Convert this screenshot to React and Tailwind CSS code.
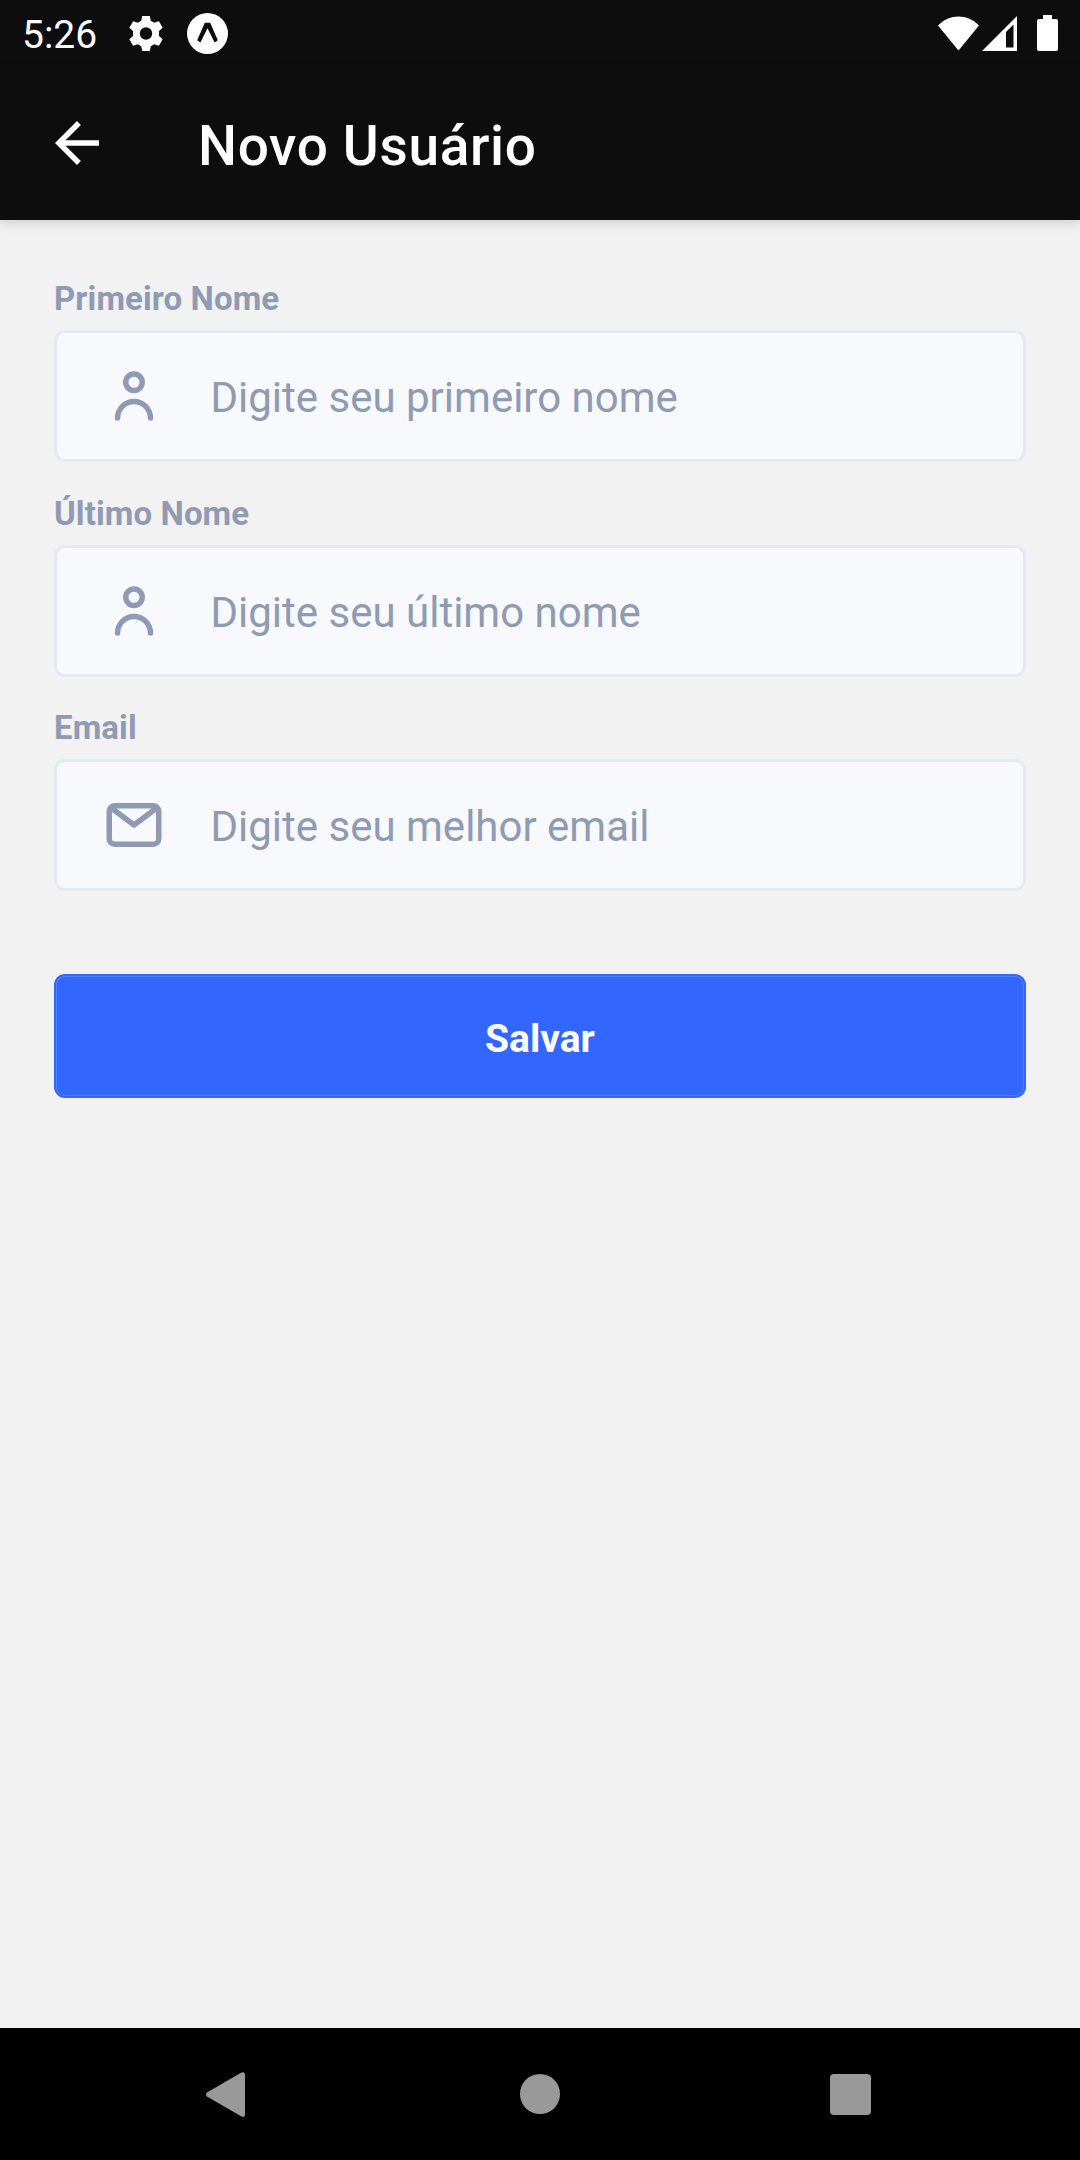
const PersonIcon = () => (
  <svg viewBox="0 0 24 24" className="size-[66px] shrink-0 fill-[#8f9bb3]">
    <path d="M12 11a4 4 0 1 0-4-4 4 4 0 0 0 4 4zm0-6a2 2 0 1 1-2 2 2 2 0 0 1 2-2z" />
    <path d="M12 13a7 7 0 0 0-7 7 1 1 0 0 0 2 0 5 5 0 0 1 10 0 1 1 0 0 0 2 0 7 7 0 0 0-7-7z" />
  </svg>
);

const EmailIcon = () => (
  <svg viewBox="0 0 24 24" className="size-[66px] shrink-0 fill-[#8f9bb3]">
    <path d="M19 4H5a3 3 0 0 0-3 3v10a3 3 0 0 0 3 3h14a3 3 0 0 0 3-3V7a3 3 0 0 0-3-3zm-.67 2L12 10.75 5.67 6zM19 18H5a1 1 0 0 1-1-1V7.25l7.4 5.55a1 1 0 0 0 1.2 0L20 7.25V17a1 1 0 0 1-1 1z" />
  </svg>
);

function StatusBar() {
  return (
    <div className="flex h-[66px] items-center bg-[#0d0d0d] pr-[22px] pl-[22px] text-white">
      <span className="w-[107px] pt-[3px] text-[39px] leading-[46px]">5:26</span>
      <svg viewBox="0 0 34 35" className="mt-[1px] h-[35px] w-[34px] fill-white">
        <path
          fillRule="evenodd"
          d="M13.2 0h7.6l1 4.8 3.4 2 4.7-1.6 3.8 6.6-3.7 3.2v5l3.7 3.2-3.8 6.6-4.7-1.6-3.4 2-1 4.8h-7.6l-1-4.8-3.4-2-4.7 1.6L.3 23.2 4 20v-5L.3 11.8l3.8-6.6 4.7 1.6 3.4-2zM17 11.3a6.2 6.2 0 1 0 0 12.4 6.2 6.2 0 0 0 0-12.4z"
        />
      </svg>
      <svg viewBox="0 0 41 41" className="ml-[24px] size-[41px]">
        <circle cx="20.5" cy="20.5" r="20.5" fill="#fff" />
        <path d="M17.8 9.7h5.4l7.6 17.6-3.2 2.2-7.1-14.3-7.1 14.3-3.2-2.2z" fill="#0d0d0d" />
      </svg>
      <svg viewBox="0 0 41 35" className="ml-auto h-[35px] w-[41px] fill-white">
        <path d="M0 9.5C11.5-2.5 29.5-2.5 41 9.5L20.5 34.5z" />
      </svg>
      <svg viewBox="0 0 35 35" className="ml-[3px] size-[35px] fill-white">
        <path fillRule="evenodd" d="M35 0v35H0zM31.5 8.5L24 16v15.5h7.5z" />
      </svg>
      <svg viewBox="0 0 21 36" className="ml-[20px] h-[36px] w-[21px] fill-white">
        <path d="M6 0h9v4h4a2 2 0 0 1 2 2v28a2 2 0 0 1-2 2H2a2 2 0 0 1-2-2V6a2 2 0 0 1 2-2h4z" />
      </svg>
    </div>
  );
}

function Header() {
  return (
    <header className="relative flex h-[154px] items-center bg-[#0d0d0d] pl-[44px] text-white shadow-[0_3px_11px_rgba(0,0,0,0.15)]">
      <svg viewBox="0 0 24 24" className="size-[66px] fill-white">
        <path d="M20 11H7.83l5.59-5.59L12 4l-8 8 8 8 1.41-1.41L7.83 13H20v-2z" />
      </svg>
      <h1 className="ml-[88px] pt-[6px] text-[55px] leading-[74px] font-medium tracking-[0.65px]">
        Novo Usuário
      </h1>
    </header>
  );
}

function Field({ label, placeholder, icon }) {
  return (
    <div className="flex flex-col">
      <span className="mb-[12px] text-[33px] leading-[38px] font-bold tracking-[0.1px]">{label}</span>
      <div className="flex h-[132px] items-center rounded-[11px] border-[3px] border-[#e4e9f2] bg-[#f7f9fc] pl-[44px]">
        {icon}
        <span className="ml-[43.5px] pt-[4px] text-[42px] leading-[50px]">{placeholder}</span>
      </div>
    </div>
  );
}

function NavBar() {
  return (
    <nav className="flex h-[132px] items-center bg-black pl-[206px]">
      <svg viewBox="0 0 39 45" className="h-[45px] w-[39px] fill-[#999]">
        <path d="M1 20.5L35 .7Q39-1 39 3v39q0 4-4 2.3L1 24.5Q-1 22.5 1 20.5z" />
      </svg>
      <div className="ml-[275px] size-[40px] rounded-full bg-[#999]" />
      <div className="ml-[270px] size-[41px] rounded-[4px] bg-[#999]" />
    </nav>
  );
}

export default function App() {
  return (
    <div className="flex h-[2160px] w-[1080px] flex-col overflow-hidden bg-[#f2f2f2] font-[Roboto,sans-serif]">
      <StatusBar />
      <Header />
      <main className="flex flex-1 flex-col px-[54px] pt-[60px] text-[#8f9bb3]">
        <div className="flex flex-col gap-[32.5px]">
          <Field label="Primeiro Nome" placeholder="Digite seu primeiro nome" icon={<PersonIcon />} />
          <Field label="Último Nome" placeholder="Digite seu último nome" icon={<PersonIcon />} />
          <Field label="Email" placeholder="Digite seu melhor email" icon={<EmailIcon />} />
        </div>
        <button className="mt-[83px] h-[124px] rounded-[11px] bg-[#3366ff] p-[2px] text-[39px] font-bold text-white">
          <span className="flex h-full items-center justify-center rounded-[9px] border border-[#5580ff] pt-[6px]">
            Salvar
          </span>
        </button>
      </main>
      <NavBar />
    </div>
  );
}
